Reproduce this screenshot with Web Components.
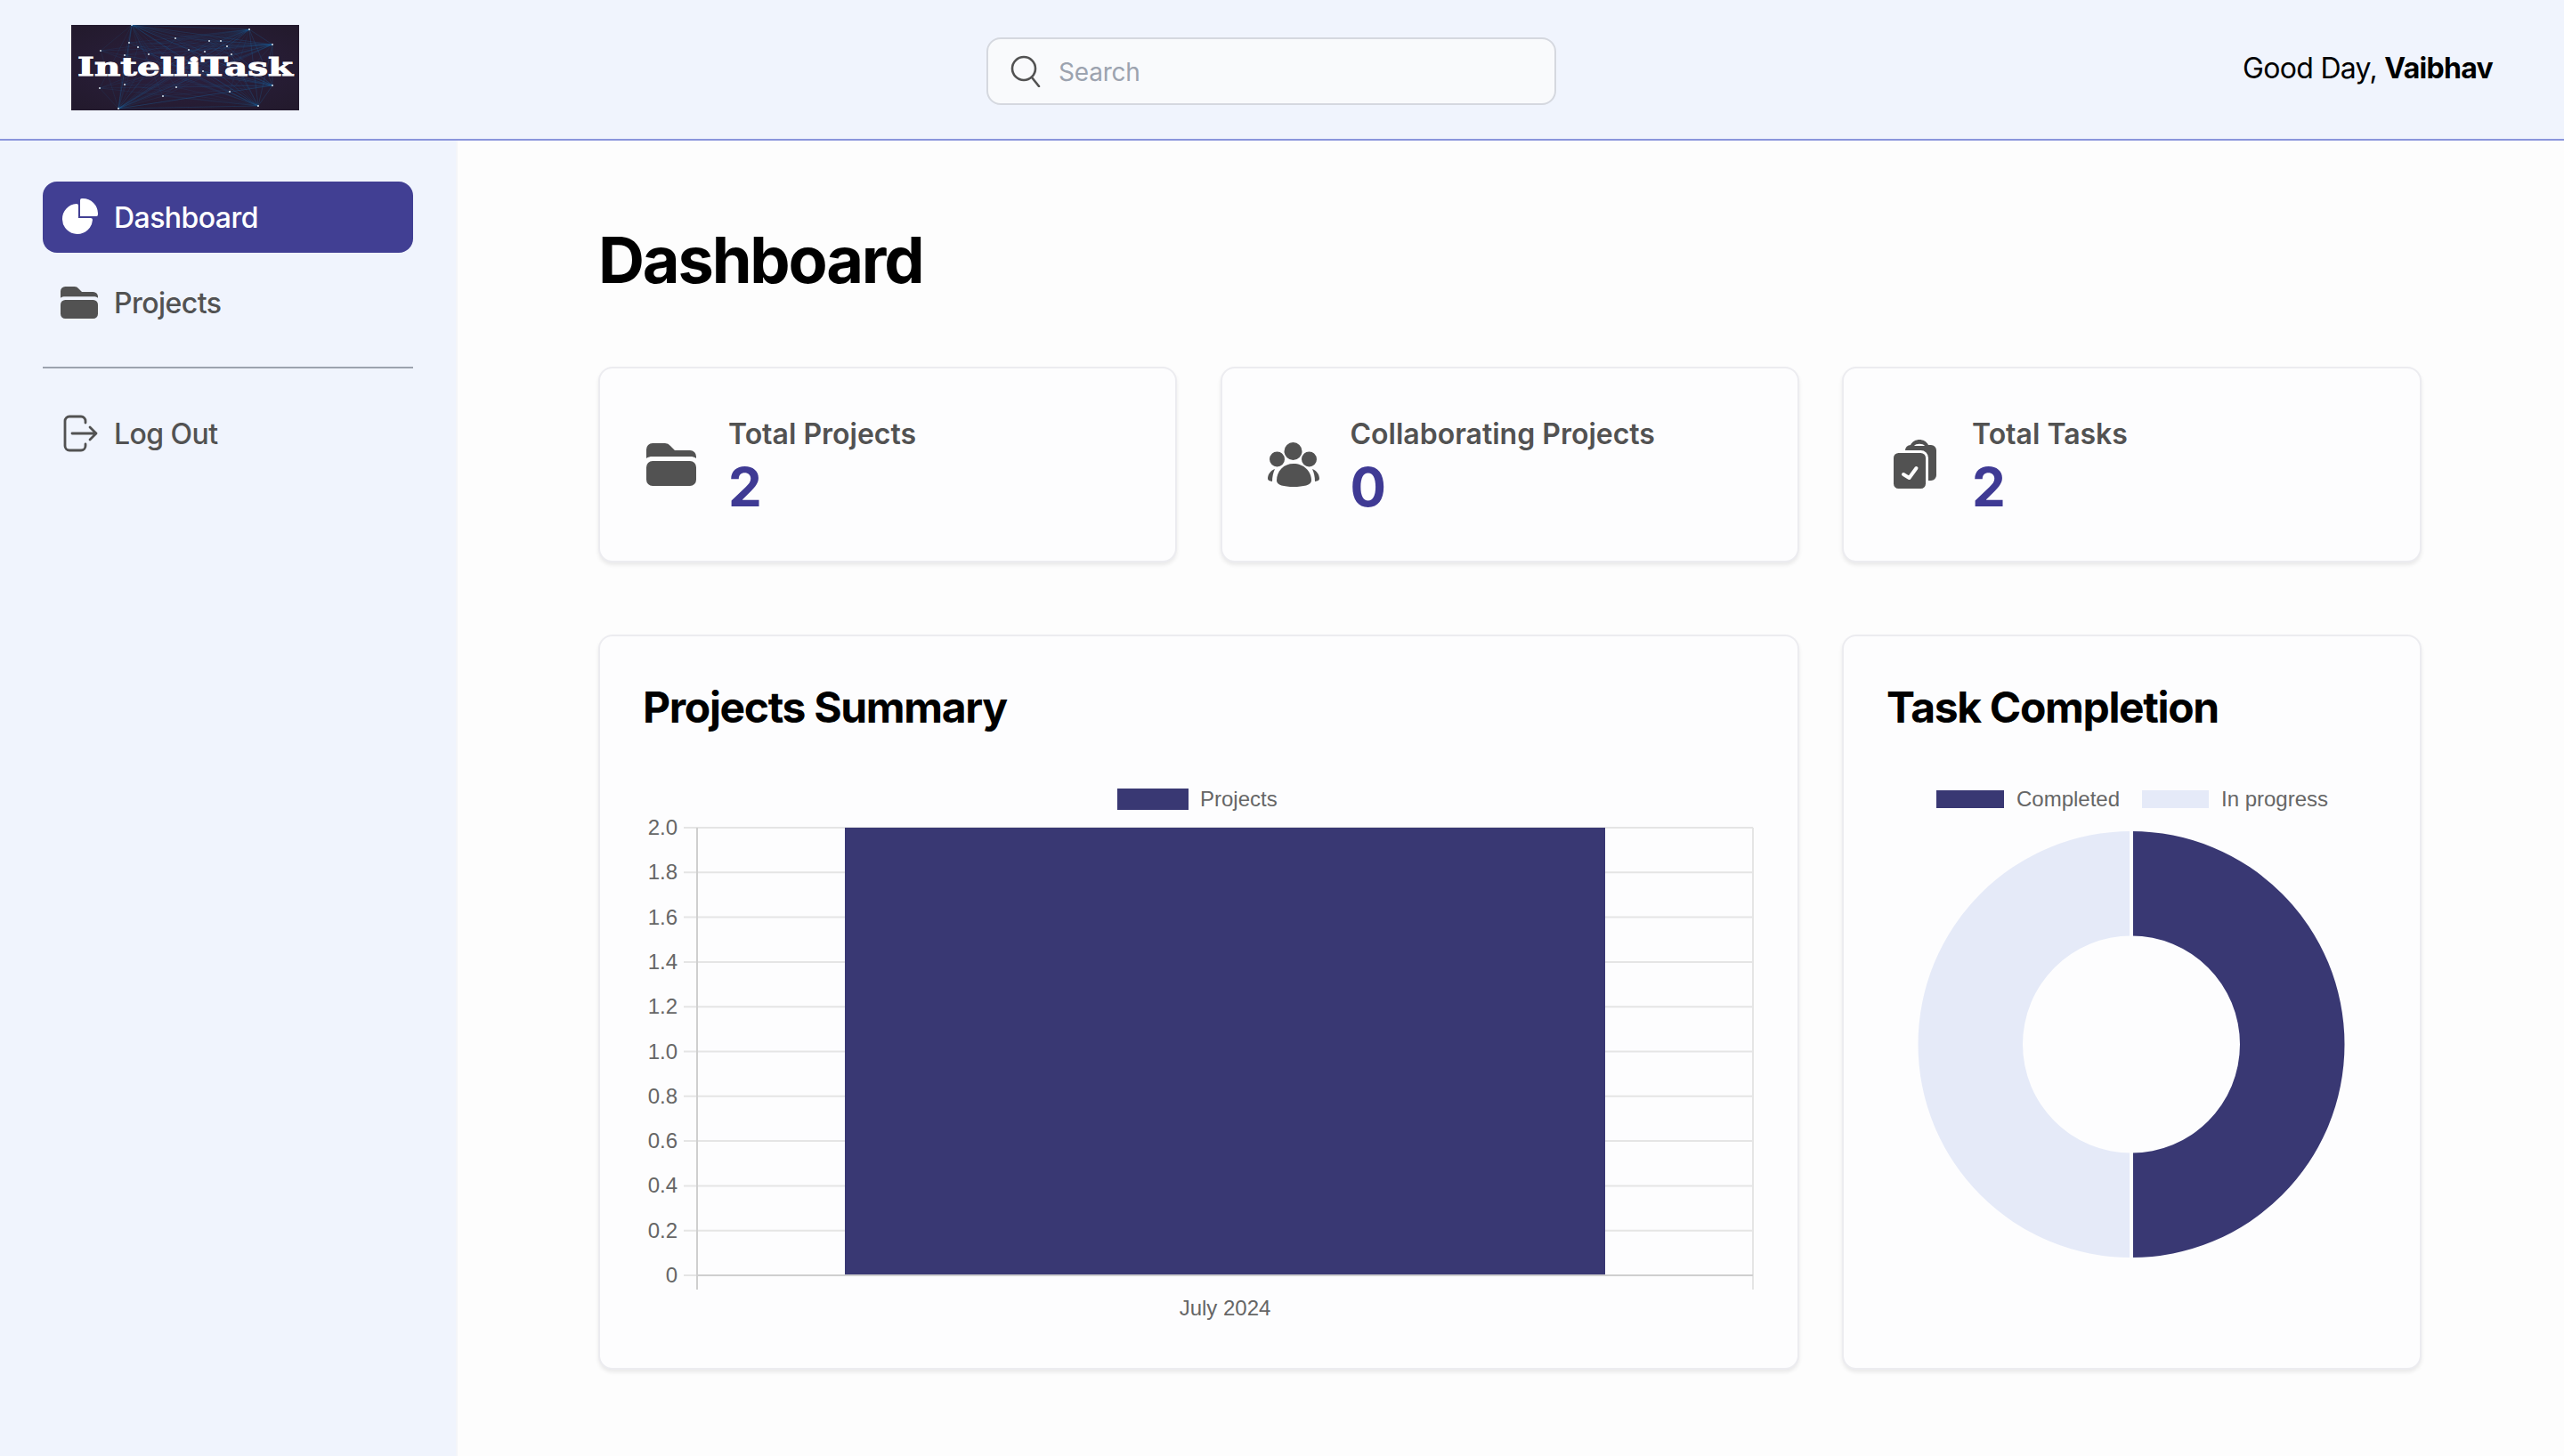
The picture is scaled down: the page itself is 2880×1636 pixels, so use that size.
<!DOCTYPE html>
<html lang="en">
<head>
<meta charset="utf-8">
<title>IntelliTask</title>
<style>
    html, body{
        margin: 0;
        height: 100%;
        background: #fdfdfd;
        font-family: Inter, "Liberation Sans", sans-serif;
    }
</style>
</head>
<body>
<app-shell></app-shell>

<script>
const FOLDER_ICON = `<svg viewBox="0 0 56 48" fill="#525252"><path d="M0 16V7a7 7 0 0 1 7-7h14a8 8 0 0 1 6 3l5 5h17a7 7 0 0 1 7 7v2c-2-1.500-4-2-7-2H7c-3 0-5 .5-7 2Z"/><path d="M7 20h42a7 7 0 0 1 7 7v14a7 7 0 0 1-7 7H7a7 7 0 0 1-7-7V27a7 7 0 0 1 7-7Z"/></svg>`;

const PEOPLE_ICON = `<svg viewBox="0 0 58 50" fill="#525252"><circle cx="28.500" cy="10" r="10"/><circle cx="10.500" cy="19" r="8.500"/><circle cx="46.500" cy="19" r="8.500"/><path d="M10 43C10 32 18 24 29 24s20 8 20 19c0 5-9 7-20 7s-19-2-19-7Z"/><path d="M0 41c0-5 3-9 8-11-2 4-3 9-3 14-3-.5-5-1.500-5-3Z"/><path d="M58 41c0-5-3-9-8-11 2 4 3 9 3 14 3-.5 5-1.500 5-3Z"/></svg>`;

const TASKS_ICON = `<svg viewBox="0 0 49 56" fill="#525252"><path d="M19 6c2-4 6-6 10-6s8 2 10 6h3a6 6 0 0 1 6 6v28a6 6 0 0 1-6 6H19a6 6 0 0 1-6-6V12a6 6 0 0 1 6-6Z"/><path d="M23 7c2-3 10-3 12 0Z" fill="#fdfdfd"/><rect x="-1.500" y="13.500" width="39" height="43" rx="7" fill="#525252" stroke="#fdfdfd" stroke-width="3"/><path d="M11 39l6.500 4L25.500 32" fill="none" stroke="#fdfdfd" stroke-width="4" stroke-linecap="round" stroke-linejoin="round"/></svg>`;

const PIE_ICON = `<svg viewBox="0 0 21 21" fill="#fff"><path d="M16.975 11H10V4.025a1 1 0 0 0-1.066-.998 8.500 8.500 0 1 0 9.039 9.039.999.999 0 0 0-1-1.066h.002Z"/><path d="M12.500 0c-.157 0-.311.01-.565.027A1 1 0 0 0 11 1.020V10h8.975a1 1 0 0 0 1-.935c.013-.188.028-.374.028-.565A8.510 8.510 0 0 0 12.500 0Z"/></svg>`;

const LOGOUT_ICON = `<svg viewBox="0 0 42 42" fill="none" stroke="#525252" stroke-width="2.800" stroke-linecap="round" stroke-linejoin="round"><path d="M28 9V7a5 5 0 0 0-5-5H10a5 5 0 0 0-5 5v28a5 5 0 0 0 5 5h13a5 5 0 0 0 5-5v-2"/><path d="M13 21h27M33 14l7 7-7 7"/></svg>`;

class AppLogo extends HTMLElement {
    connectedCallback(){
        const root = this.attachShadow({mode: "open"});
        const hubs = [[68,0],[200,5],[53,94],[210,91],[226,68],[226,22]];
        const dots = [[33,29],[60,34],[75,25],[87,33],[117,15],[155,18],[175,24],[168,18],[180,33],[118,70],[60,67],[32,71],[103,80],[178,75],[132,28],[148,52],[65,20],[122,51],[90,47],[150,30]];
        let lines = ``;
        hubs.forEach((h) => {
            dots.forEach((d) => {
                lines += `<line x1="${h[0]}" y1="${h[1]}" x2="${d[0]}" y2="${d[1]}"/>`;
            });
            hubs.forEach((o) => {
                lines += `<line x1="${h[0]}" y1="${h[1]}" x2="${o[0]}" y2="${o[1]}"/>`;
            });
        });
        let points = ``;
        hubs.concat(dots).forEach((d) => {
            points += `<circle cx="${d[0]}" cy="${d[1]}" r="1"/>`;
        });
        root.innerHTML = `
        <style>
            :host{
                display: block;
                width: 256px;
                height: 96px;
            }
            svg{ display: block; }
        </style>
        <svg width="256" height="96" viewBox="0 0 256 96">
            <defs>
                <radialGradient id="bg" cx="50%" cy="50%" r="65%">
                    <stop offset="0" stop-color="#2c2040"/>
                    <stop offset="1" stop-color="#231a2d"/>
                </radialGradient>
            </defs>
            <rect width="256" height="96" fill="url(#bg)"/>
            <g stroke="#1f6fa8" stroke-width=".5" stroke-opacity=".26">${lines}</g>
            <g fill="#d9e2ea">${points}</g>
            <text x="7" y="56.500" textLength="242" lengthAdjust="spacingAndGlyphs" font-family="'DejaVu Serif', serif" font-weight="700" font-size="28" fill="#fff" stroke="#fff" stroke-width=".9">IntelliTask</text>
        </svg>
        `;
    }
}

class SearchBox extends HTMLElement {
    connectedCallback(){
        const root = this.attachShadow({mode: "open"});
        root.innerHTML = `
        <style>
            :host{
                display: flex;
                align-items: center;
                box-sizing: border-box;
                width: 640px;
                height: 76px;
                padding-left: 25px;
                gap: 18px;
                background: #f9fafc;
                border: 2px solid #d5d8df;
                border-radius: 16px;
            }
            svg{ width: 36px; height: 36px; flex: none; }
            span{
                font-size: 28px;
                letter-spacing: -.2px;
                color: #9ca3af;
                position: relative;
                top: 1px;
            }
        </style>
        <svg viewBox="0 0 36 36" fill="none" stroke="#525252" stroke-width="2.600" stroke-linecap="round"><circle cx="15" cy="15" r="13"/><path d="M24 25l8 10"/></svg>
        <span><slot></slot></span>
        `;
    }
}

class AppHeader extends HTMLElement {
    connectedCallback(){
        const root = this.attachShadow({mode: "open"});
        root.innerHTML = `
        <style>
            :host{
                display: flex;
                align-items: center;
                box-sizing: border-box;
                height: 158px;
                padding: 0 80px;
                background: #f0f4fd;
                border-bottom: 2px solid #8a95dc;
            }
            .logo{ padding-bottom: 4px; }
            search-box{ margin: 4px 0 0 772px; }
            .greet{
                margin-left: auto;
                font-size: 32px;
                letter-spacing: -.7px;
                color: #000;
                padding-bottom: 4px;
            }
            b{ font-weight: 700; }
        </style>
        <div class="logo"><app-logo></app-logo></div>
        <search-box>Search</search-box>
        <div class="greet">Good Day, <b>Vaibhav</b></div>
        `;
    }
}

class NavItem extends HTMLElement {
    connectedCallback(){
        const root = this.attachShadow({mode: "open"});
        root.innerHTML = `
        <style>
            :host{
                display: flex;
                align-items: center;
                gap: 18px;
                height: 80px;
                padding-left: 20px;
                border-radius: 16px;
                font-size: 32px;
                font-weight: 500;
                letter-spacing: -.55px;
                color: #525252;
            }
            :host([active]){
                background: #413f93;
                color: #fff;
            }
            .icon{
                display: flex;
                align-items: center;
                justify-content: center;
                width: 42px;
                height: 42px;
            }
            .icon svg{ display: block; width: 100%; }
        </style>
        <span class="icon">${this.iconSvg()}</span>
        <slot></slot>
        `;
    }
    iconSvg(){
        const icons = {pie: PIE_ICON, folder: FOLDER_ICON, logout: LOGOUT_ICON};
        return icons[this.getAttribute("icon")];
    }
}

class AppSidebar extends HTMLElement {
    connectedCallback(){
        const root = this.attachShadow({mode: "open"});
        root.innerHTML = `
        <style>
            :host{
                display: block;
                box-sizing: border-box;
                width: 514px;
                padding: 46px 48px 0 48px;
                background: #f0f4fd;
                border-right: 2px solid #f4f5f9;
            }
            nav-item{ margin-bottom: 16px; }
            hr{
                border: 0;
                height: 2px;
                background: #9ca3af;
                margin: 32px 0 33px;
            }
        </style>
        <nav-item icon="pie" active>Dashboard</nav-item>
        <nav-item icon="folder">Projects</nav-item>
        <hr>
        <nav-item icon="logout">Log Out</nav-item>
        `;
    }
}

class StatCard extends HTMLElement {
    connectedCallback(){
        const root = this.attachShadow({mode: "open"});
        const icons = {folder: FOLDER_ICON, people: PEOPLE_ICON, tasks: TASKS_ICON};
        const sizes = {folder: 56, people: 58, tasks: 49};
        const name = this.getAttribute("icon");
        root.innerHTML = `
        <style>
            :host{
                display: flex;
                align-items: center;
                box-sizing: border-box;
                height: 220px;
                padding-left: 50px;
                gap: 34px;
                background: #fdfdfe;
                border: 2px solid #ececf0;
                border-radius: 16px;
                box-shadow: 0 3px 4px rgba(0,0,0,.08);
            }
            .icon{
                display: flex;
                justify-content: center;
                width: 60px;
                flex: none;
            }
            .icon svg{ display: block; width: ${sizes[name]}px; }
            .label{
                font-size: 32px;
                font-weight: 640;
                line-height: 40px;
                color: #525252;
            }
            .value{
                margin-top: 9px;
                font-size: 60px;
                font-weight: 700;
                line-height: 60px;
                color: #3f3a94;
            }
        </style>
        <div class="icon">${icons[name]}</div>
        <div>
            <div class="label"><slot></slot></div>
            <div class="value">${this.getAttribute("value")}</div>
        </div>
        `;
    }
}

class ChartCard extends HTMLElement {
    connectedCallback(){
        const root = this.attachShadow({mode: "open"});
        root.innerHTML = `
        <style>
            :host{
                display: block;
                box-sizing: border-box;
                height: 826px;
                padding: 52px 0 0 48px;
                background: #fdfdfe;
                border: 2px solid #ececf0;
                border-radius: 16px;
                box-shadow: 0 3px 4px rgba(0,0,0,.08);
            }
            h2{
                margin: 0 0 47px;
                font-size: 48px;
                font-weight: 700;
                line-height: 56px;
                letter-spacing: -.028em;
                color: #000;
            }
        </style>
        <h2>${this.getAttribute("heading")}</h2>
        <slot></slot>
        `;
    }
}

class BarChart extends HTMLElement {
    connectedCallback(){
        const root = this.attachShadow({mode: "open"});
        const labels = ["2.0","1.8","1.6","1.4","1.2","1.0","0.8","0.6","0.4","0.2","0"];
        let grid = ``;
        labels.forEach((el, i) => {
            const y = 930 + i * 50.3;
            grid += `<line x1="768" x2="1969" y1="${y}" y2="${y}" stroke="#e5e5e5" stroke-width="2"/>`;
            grid += `<text x="761" y="${y + 8}" text-anchor="end">${el}</text>`;
        });
        root.innerHTML = `
        <style>
            :host{ display: block; }
            svg{ display: block; }
            text{ font-family: "Liberation Sans", Arial, sans-serif; font-size: 24px; fill: #666; }
        </style>
        <svg width="1250" height="620" viewBox="722 870 1250 620">
            <rect x="1255" y="886" width="80" height="24" fill="#393873"/>
            <text x="1348" y="906">Projects</text>
            ${grid}
            <line x1="783" x2="783" y1="930" y2="1449" stroke="#cfcfcf" stroke-width="2"/>
            <line x1="1969" x2="1969" y1="930" y2="1449" stroke="#e5e5e5" stroke-width="2"/>
            <rect x="949" y="930" width="854" height="503" fill="#393873"/>
            <line x1="783" x2="1969" y1="1433" y2="1433" stroke="#cfcfcf" stroke-width="2"/>
            <text x="1376" y="1478" text-anchor="middle">July 2024</text>
        </svg>
        `;
    }
}

class DonutChart extends HTMLElement {
    connectedCallback(){
        const root = this.attachShadow({mode: "open"});
        const cx = 2394, cy = 1173.500, r = 239.500, inner = 122;
        root.innerHTML = `
        <style>
            :host{ display: block; }
            svg{ display: block; }
            text{ font-family: "Liberation Sans", Arial, sans-serif; font-size: 24px; fill: #666; }
        </style>
        <svg width="552" height="600" viewBox="2119 870 552 600">
            <rect x="2175" y="888" width="76" height="20" fill="#393873"/>
            <text x="2265" y="906">Completed</text>
            <rect x="2406" y="888" width="75" height="20" fill="#e5eaf8"/>
            <text x="2495" y="906">In progress</text>
            <path d="M${cx} ${cy - r}A${r} ${r} 0 0 1 ${cx} ${cy + r}V${cy + inner}A${inner} ${inner} 0 0 0 ${cx} ${cy - inner}Z" fill="#393873"/>
            <path d="M${cx} ${cy - r}A${r} ${r} 0 0 0 ${cx} ${cy + r}V${cy + inner}A${inner} ${inner} 0 0 1 ${cx} ${cy - inner}Z" fill="#e5eaf8"/>
            <line x1="${cx}" x2="${cx}" y1="${cy - r - 2}" y2="${cy + r + 2}" stroke="#fdfdfe" stroke-width="4"/>
        </svg>
        `;
    }
}

class DashboardPage extends HTMLElement {
    connectedCallback(){
        const root = this.attachShadow({mode: "open"});
        root.innerHTML = `
        <style>
            :host{
                display: block;
                flex: 1;
                box-sizing: border-box;
                padding: 94px 160px 0 158px;
                background: #fdfdfd;
            }
            h1{
                margin: 0 0 80px;
                font-size: 72px;
                font-weight: 700;
                line-height: 80px;
                letter-spacing: -.03em;
                color: #000;
            }
            .grid{
                display: grid;
                grid-template-columns: 650px 650px 651px;
                column-gap: 48.500px;
                row-gap: 81px;
            }
            .wide{ grid-column: span 2; }
        </style>
        <h1>Dashboard</h1>
        <div class="grid">
            <stat-card icon="folder" value="2">Total Projects</stat-card>
            <stat-card icon="people" value="0">Collaborating Projects</stat-card>
            <stat-card icon="tasks" value="2">Total Tasks</stat-card>
            <chart-card class="wide" heading="Projects Summary"><bar-chart></bar-chart></chart-card>
            <chart-card heading="Task Completion"><donut-chart></donut-chart></chart-card>
        </div>
        `;
    }
}

class AppShell extends HTMLElement {
    connectedCallback(){
        const root = this.attachShadow({mode: "open"});
        root.innerHTML = `
        <style>
            :host{
                display: flex;
                flex-direction: column;
                height: 1636px;
                overflow: hidden;
            }
            .body{
                display: flex;
                flex: 1;
            }
        </style>
        <app-header></app-header>
        <div class="body">
            <app-sidebar></app-sidebar>
            <dashboard-page></dashboard-page>
        </div>
        `;
    }
}

customElements.define("app-logo", AppLogo);
customElements.define("search-box", SearchBox);
customElements.define("app-header", AppHeader);
customElements.define("nav-item", NavItem);
customElements.define("app-sidebar", AppSidebar);
customElements.define("stat-card", StatCard);
customElements.define("chart-card", ChartCard);
customElements.define("bar-chart", BarChart);
customElements.define("donut-chart", DonutChart);
customElements.define("dashboard-page", DashboardPage);
customElements.define("app-shell", AppShell);
</script>
</body>
</html>
